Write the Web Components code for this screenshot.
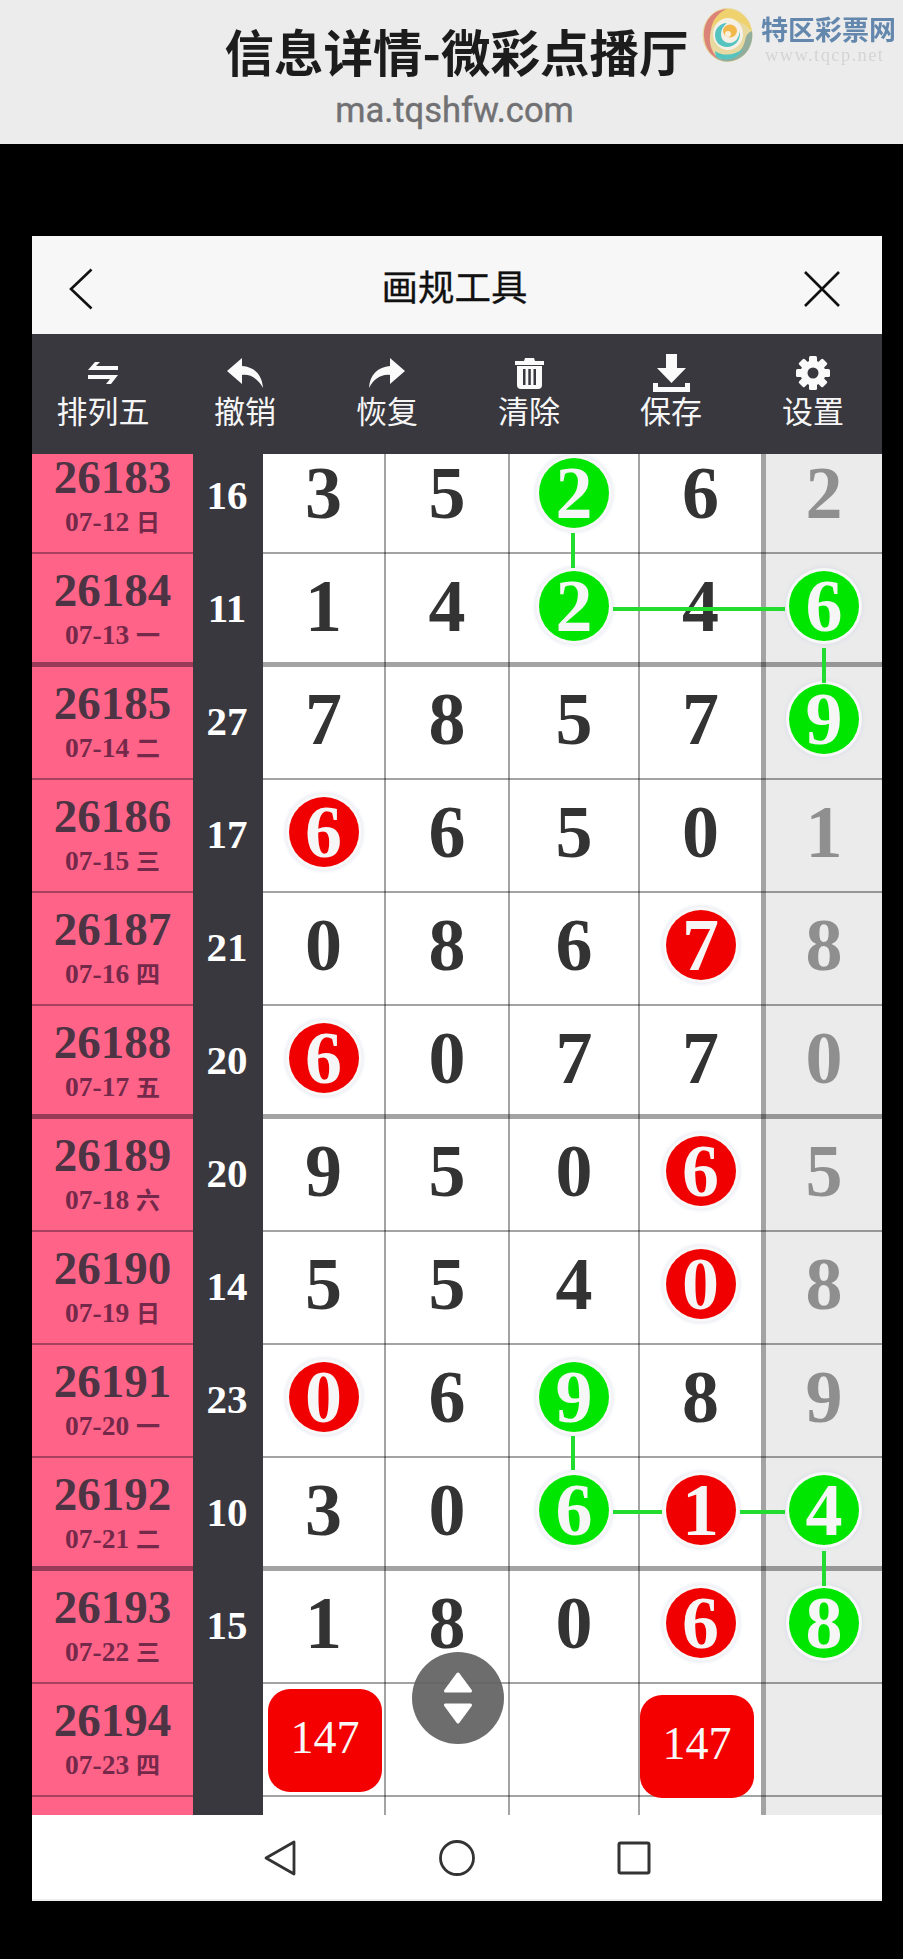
<!DOCTYPE html>
<html lang="zh">
<head>
<meta charset="utf-8">
<title>画规工具</title>
<style>
  html, body { margin: 0; padding: 0; background: #000; }
  body { font-family: "Noto Sans CJK SC", "Noto Sans", sans-serif; width: 903px; height: 1959px; overflow: hidden; }
  .panel { display: block; width: 850px; margin: 92px 0 0 32px; }
</style>
</head>
<body>
<top-banner title-text="信息详情-微彩点播厅" site="ma.tqshfw.com"></top-banner>

<div class="panel">
  <tool-header>画规工具</tool-header>
  <tool-bar>
    <tool-item label="排列五">
      <svg width="30" height="24" viewBox="0 0 30 24" fill="#fafafa"><path d="M0 9 7 1h5L8 5h22v4zM0 14h30l-7 9h-5l4-5H0z"/></svg>
    </tool-item>
    <tool-item label="撤销">
      <svg width="36" height="30" viewBox="0 0 36 30" fill="#fafafa"><path d="M15 0 0 13l15 13v-9c9-1 16 4 21 13C35 16 27 9 15 8z"/></svg>
    </tool-item>
    <tool-item label="恢复">
      <svg width="36" height="30" viewBox="0 0 36 30" fill="#fafafa"><path d="M21 0 36 13 21 26v-9c-9-1-16 4-21 13C1 16 9 9 21 8z"/></svg>
    </tool-item>
    <tool-item label="清除">
      <svg width="31" height="32" viewBox="0 0 31 32" fill="#fafafa"><path fill-rule="evenodd" d="M10 4 11 1h9l1 3h9v4H1V4zM3 9h25v19a4 4 0 0 1-4 4H7a4 4 0 0 1-4-4zM9 12v16h2.500V12zM14.300 12v16h2.500V12zM19.500 12v16H22V12z"/></svg>
    </tool-item>
    <tool-item label="保存">
      <svg width="37" height="38" viewBox="0 0 37 38" fill="#fafafa"><path d="M13 0h11v14h9L18.500 29 4 14h9zM0 29h5v4h27v-4h5v9H0z"/></svg>
    </tool-item>
    <tool-item label="设置">
      <svg width="34" height="34" viewBox="0 0 34 34"><g fill="#fafafa"><circle cx="17" cy="17" r="12.500"/><rect x="13" y="0" width="8" height="34" rx="1.500"/><rect x="13" y="0" width="8" height="34" rx="1.500" transform="rotate(45 17 17)"/><rect x="13" y="0" width="8" height="34" rx="1.500" transform="rotate(90 17 17)"/><rect x="13" y="0" width="8" height="34" rx="1.500" transform="rotate(135 17 17)"/></g><circle cx="17" cy="17" r="5.500" fill="#39383f"/></svg>
    </tool-item>
  </tool-bar>
  <draw-grid></draw-grid>
  <nav-bar></nav-bar>
</div>

<script>
class TopBanner extends HTMLElement {
  connectedCallback() {
    this.attachShadow({ mode: 'open' });
    this.shadowRoot.innerHTML = `
      <style>
        :host { display: flex; flex-direction: column; align-items: center; height: 144px; box-sizing: border-box; padding: 15px 0 0 0; background: #ececec; position: relative; }
        .title { font: 700 49.500px/72px "Noto Sans CJK SC", sans-serif; color: #1c1c1c; padding-left: 10px; }
        .site { font: 400 34.500px/44px Roboto, "Noto Sans", sans-serif; color: #717174; margin-top: 1px; padding-left: 6px; -webkit-text-stroke: .4px #717174; }
        .logo { position: absolute; left: 701px; top: 7px; width: 196px; height: 60px; display: flex; filter: blur(.6px); }
        .words { margin-left: 7px; width: 136px; }
        .cn { font: 700 27px/32px "Noto Sans CJK SC", sans-serif; color: #6488ad; margin-top: 6px; white-space: nowrap; }
        .en { font: 400 18.500px/20px "Liberation Serif", serif; color: #d4d4d4; letter-spacing: 1.400px; margin: 0 0 0 4px; white-space: nowrap; }
      </style>
      <div class="title">${this.getAttribute('title-text')}</div>
      <div class="site">${this.getAttribute('site')}</div>
      <div class="logo">
        <svg width="53" height="56" viewBox="0 0 53 56" fill="none">
          <ellipse cx="26.500" cy="28" rx="25" ry="27" fill="#e8d9a0"/>
          <path d="M26 2C10 3 2 16 3 30c1 12 8 20 16 23-7-6-11-14-10-24C10 17 17 7 26 2z" fill="#dc8378"/>
          <path d="M26 2c13 0 24 11 25 24-5-9-13-13-24-13-7 0-13 3-17 9C12 12 18 5 26 2z" fill="#efd26e"/>
          <path d="M51 24c2 14-6 27-20 30-7 1-12 0-16-3 12 2 24-3 28-14 2-5 1-10 8-13z" fill="#93ad9c"/>
          <path d="M15 50c10 5 22 2 27-8-8 6-19 8-28 2z" fill="#55c4c0"/>
          <ellipse cx="27" cy="27" rx="15" ry="16" fill="#f4f0e6"/>
          <path d="M39 24c1 9-5 16-13 16-7 0-12-5-12-12 0-6 5-12 12-12-4 3-6 7-6 11 0 6 4 9 9 9 5 0 9-5 10-12z" fill="#55c4c0"/>
          <ellipse cx="29" cy="24" rx="7" ry="6.500" fill="#f3b84c"/>
          <ellipse cx="27" cy="27" rx="3" ry="3" fill="#f8f0d8"/>
        </svg>
        <div class="words">
          <div class="cn">特区彩票网</div>
          <div class="en">www.tqcp.net</div>
        </div>
      </div>
    `;
  }
}

class ToolHeader extends HTMLElement {
  connectedCallback() {
    this.attachShadow({ mode: 'open' });
    this.shadowRoot.innerHTML = `
      <style>
        :host { display: grid; grid-template-columns: 1fr auto 1fr; align-items: center; height: 98px; box-sizing: border-box; padding: 0 42px 0 37px; background: #f7f7f7; }
        .title { font: 400 36.500px/50px "Noto Sans CJK SC", sans-serif; color: #111; margin-top: 1px; -webkit-text-stroke: .3px #111; }
        svg { margin-top: 8px; }
        .close { justify-self: end; }
      </style>
      <svg width="24" height="42" viewBox="0 0 24 42" fill="none" stroke="#111" stroke-width="2.600"><path d="M22.500 1.500 2 21l20.500 19.500"/></svg>
      <div class="title"><slot></slot></div>
      <svg class="close" width="36" height="36" viewBox="0 0 36 36" fill="none" stroke="#111" stroke-width="2.600"><path d="M1 1l34 34M35 1 1 35"/></svg>
    `;
  }
}

class ToolBar extends HTMLElement {
  connectedCallback() {
    this.attachShadow({ mode: 'open' });
    this.shadowRoot.innerHTML = `
      <style>
        :host { display: grid; grid-template-columns: repeat(6, 142px); justify-content: start; height: 120px; box-sizing: border-box; padding-top: 20px; background: #39383f; }
      </style>
      <slot></slot>
    `;
  }
}

class ToolItem extends HTMLElement {
  connectedCallback() {
    this.attachShadow({ mode: 'open' });
    this.shadowRoot.innerHTML = `
      <style>
        :host { display: flex; flex-direction: column; align-items: center; }
        .icon { height: 38px; display: flex; align-items: center; justify-content: center; }
        .label { font: 400 31px/36px "Noto Sans CJK SC", sans-serif; color: #f6f6f6; white-space: nowrap; }
      </style>
      <div class="icon"><slot></slot></div>
      <div class="label">${this.getAttribute('label')}</div>
    `;
  }
}

class DigitBall extends HTMLElement {
  connectedCallback() {
    const kind = this.getAttribute('kind');
    const bg = kind === 'g' ? '#00e600' : '#f00000';
    this.attachShadow({ mode: 'open' });
    this.shadowRoot.innerHTML = `
      <style>
        :host { display: flex; align-items: center; justify-content: center; width: 70px; height: 70px; border-radius: 50%; background: ${bg}; color: #f6f6f6; box-shadow: 0 0 0 3px #f8f8f8, 0 0 3px 5px rgba(215, 220, 232, .45); }
      </style>
      <slot></slot>
    `;
  }
}

class DrawRow extends HTMLElement {
  connectedCallback() {
    const issue = this.getAttribute('issue') || '';
    const date = this.getAttribute('date') || '';
    const sum = this.getAttribute('sum') || '';
    const nums = (this.getAttribute('nums') || ',,,,').split(',');
    const line = this.hasAttribute('thick') ? 5 : 2;
    const cells = nums.map((n, i) => {
      const kind = n.length > 1 ? n[0] : '';
      const val = n.length > 1 ? n[1] : n;
      const inner = kind ? `<digit-ball kind="${kind}">${val}</digit-ball>` : val;
      return `<div class="cell c${i}">${inner}</div>`;
    }).join('');
    this.attachShadow({ mode: 'open' });
    this.shadowRoot.innerHTML = `
      <style>
        :host { display: grid; grid-template-columns: 161px 70px 123px 124px 130px 126px 116px; height: 113px; --line: ${line}px; --rule: rgba(0, 0, 0, .36); }
        .issue { box-sizing: border-box; background: #ff6488; box-shadow: inset 0 calc(var(--line) * -1) 0 rgba(110, 40, 70, ${line > 2 ? .7 : .6}); display: flex; flex-direction: column; align-items: center; padding-top: 11px; color: #4c3444; font-family: "Liberation Serif", "Noto Sans CJK SC", serif; font-weight: 700; }
        .no { font-size: 47px; line-height: 50px; }
        .date { font-size: 27.500px; line-height: 38px; margin-top: 1px; color: #75294a; white-space: nowrap; }
        .date b { font: 700 24px "Noto Sans CJK SC", sans-serif; }
        .sum { background: #39383f; color: #fff; font: 700 41px "Liberation Serif", serif; display: flex; align-items: center; justify-content: center; padding: 0 2px 5px 0; box-sizing: border-box; }
        .cell { box-sizing: border-box; position: relative; display: flex; align-items: center; justify-content: center; background: #fff; color: #333; font: 700 74px "Liberation Serif", serif; padding: 0 2px 9px 0; box-shadow: inset 0 calc(var(--line) * -1) 0 var(--rule), inset -2px 0 0 var(--rule); }
        .c3 { padding-right: 5px; box-shadow: inset 0 calc(var(--line) * -1) 0 var(--rule), inset -5px 0 0 var(--rule); }
        .c4 { background: #ebebeb; color: #8f8f8f; padding-right: 0; box-shadow: inset 0 calc(var(--line) * -1) 0 var(--rule); }
      </style>
      <div class="issue"><div class="no">${issue}</div><div class="date">${date.split(' ')[0]} <b>${date.split(' ')[1] || ''}</b></div></div>
      <div class="sum">${sum}</div>
      ${cells}
    `;
  }
}

class DrawGrid extends HTMLElement {
  connectedCallback() {
    const rows = [
      ['26183', '07-12 日', '16', '3,5,g2,6,2'],
      ['26184', '07-13 一', '11', '1,4,g2,4,g6', 1],
      ['26185', '07-14 二', '27', '7,8,5,7,g9'],
      ['26186', '07-15 三', '17', 'r6,6,5,0,1'],
      ['26187', '07-16 四', '21', '0,8,6,r7,8'],
      ['26188', '07-17 五', '20', 'r6,0,7,7,0', 1],
      ['26189', '07-18 六', '20', '9,5,0,r6,5'],
      ['26190', '07-19 日', '14', '5,5,4,r0,8'],
      ['26191', '07-20 一', '23', 'r0,6,g9,8,9'],
      ['26192', '07-21 二', '10', '3,0,g6,r1,g4', 1],
      ['26193', '07-22 三', '15', '1,8,0,r6,g8'],
      ['26194', '07-23 四', '', ''],
      ['', '', '', '']
    ];
    // joining lines, coordinates are page x / y minus the scrolled grid origin (32, 441)
    const links = [
      [541, 92, 541, 127], [581, 168, 753, 168], [792, 207, 792, 242],
      [541, 995, 541, 1029], [581, 1071, 630, 1071], [708, 1071, 753, 1071], [792, 1110, 792, 1145]
    ];
    this.attachShadow({ mode: 'open' });
    this.shadowRoot.innerHTML = `
      <style>
        :host { display: block; height: 1361px; overflow: hidden; position: relative; }
        .scroll { margin-top: -13px; position: relative; }
        .links { position: absolute; left: 0; top: 0; }
        .mark { position: absolute; width: 114px; height: 103px; border-radius: 22px; background: #f50000; color: #f8f8f8; display: flex; align-items: center; justify-content: center; padding-bottom: 6px; box-sizing: border-box; font: 400 46px "Liberation Serif", serif; }
        .m1 { left: 236px; top: 1248px; }
        .m2 { left: 608px; top: 1254px; }
        .fab { position: absolute; left: 380px; top: 1198px; width: 92px; height: 92px; border-radius: 50%; background: rgba(98, 98, 98, .93); display: flex; align-items: center; justify-content: center; }
      </style>
      <div class="scroll">
        ${rows.map(r => `<draw-row issue="${r[0]}" date="${r[1]}" sum="${r[2]}" nums="${r[3] || ',,,,'}"${r[4] ? ' thick' : ''}></draw-row>`).join('')}
        <svg class="links" width="850" height="1475" stroke="#22dc30" stroke-width="4">
          ${links.map(l => `<line x1="${l[0]}" y1="${l[1]}" x2="${l[2]}" y2="${l[3]}"/>`).join('')}
        </svg>
        <div class="mark m1">147</div>
        <div class="mark m2">147</div>
      </div>
      <div class="fab">
        <svg width="30" height="52" viewBox="0 0 30 52" fill="#fff" stroke="#fff" stroke-width="3" stroke-linejoin="round"><path d="M15 2 27.500 19h-25zM2.500 33h25L15 50z"/></svg>
      </div>
    `;
  }
}

class NavBar extends HTMLElement {
  connectedCallback() {
    this.attachShadow({ mode: 'open' });
    this.shadowRoot.innerHTML = `
      <style>
        :host { display: flex; justify-content: center; align-items: center; gap: 141px; height: 86px; box-sizing: border-box; background: #fff; border-bottom: 2px solid #eee; padding-top: 2px; }
      </style>
      <svg width="36" height="36" viewBox="0 0 36 36" fill="none" stroke="#333" stroke-width="2.800" stroke-linejoin="round"><path d="M32 2v32L4 18z"/></svg>
      <svg width="36" height="36" viewBox="0 0 36 36" fill="none" stroke="#333" stroke-width="2.800"><circle cx="18" cy="18" r="16.500"/></svg>
      <svg width="36" height="36" viewBox="0 0 36 36" fill="none" stroke="#333" stroke-width="3" stroke-linejoin="round"><rect x="3" y="3" width="30" height="30" rx="1.500"/></svg>
    `;
  }
}

customElements.define('top-banner', TopBanner);
customElements.define('tool-header', ToolHeader);
customElements.define('tool-bar', ToolBar);
customElements.define('tool-item', ToolItem);
customElements.define('digit-ball', DigitBall);
customElements.define('draw-row', DrawRow);
customElements.define('draw-grid', DrawGrid);
customElements.define('nav-bar', NavBar);
</script>
</body>
</html>
